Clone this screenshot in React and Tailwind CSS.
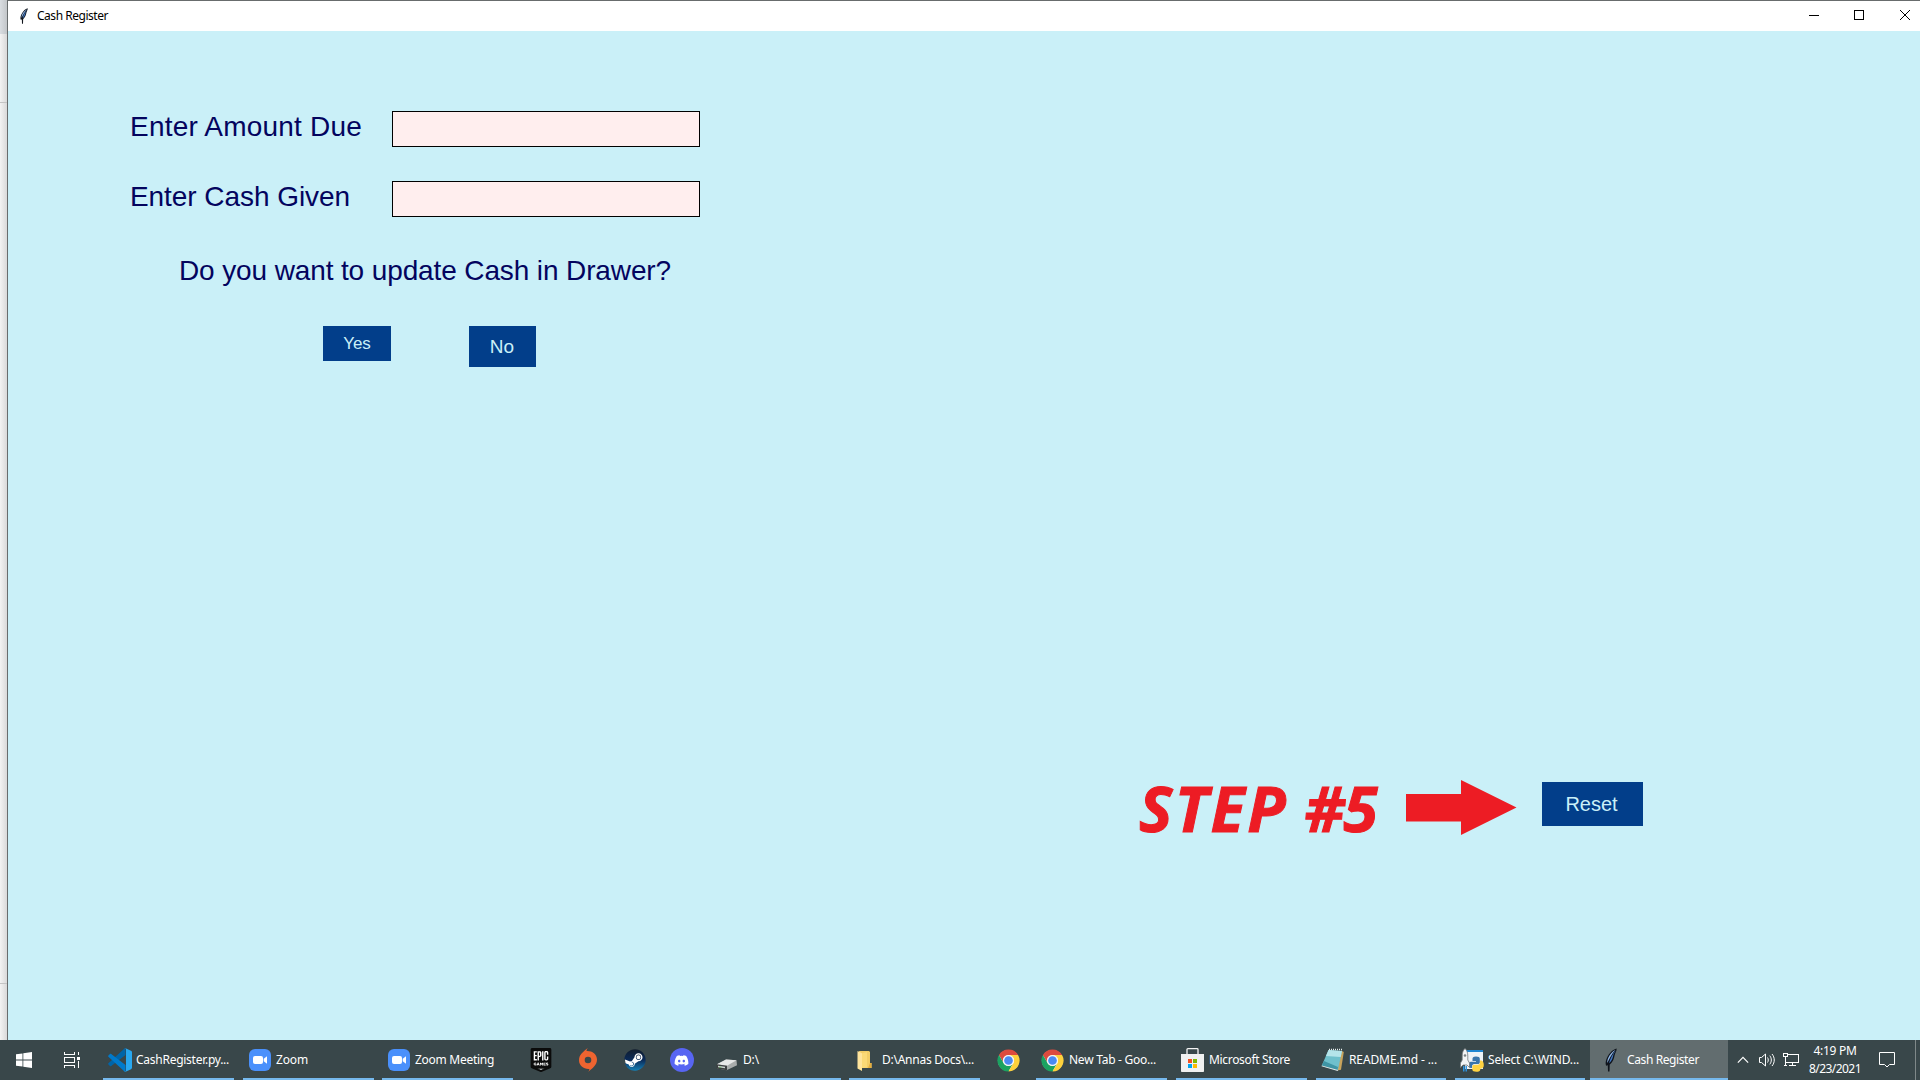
import { useLayoutEffect, useRef, useState } from "react";
import { FaSteam, FaDiscord } from "react-icons/fa";
import { SiEpicgames } from "react-icons/si";

// Single line of text whose tracking is adjusted so that it spans `width` pixels.
function FitText({ width, className = "", children }) {
  const ref = useRef(null);
  const [spacing, setSpacing] = useState(0);
  useLayoutEffect(() => {
    const natural = ref.current.getBoundingClientRect().width;
    setSpacing((width - natural) / children.length);
  }, []);
  return (
    <span ref={ref} className={`inline-block whitespace-nowrap ${className}`} style={{ letterSpacing: `${spacing}px` }}>
      {children}
    </span>
  );
}

function Feather({ className }) {
  return (
    <svg viewBox="0 0 12 24" className={className}>
      <path d="M11.6.5C8 1.4 4.4 4.800 2 9.800c-1.500 3.200-1.700 6-.9 8l1.700-.6.2 6.300h1.500l.2-6.800c3.300-2.800 4.300-6.200 5-9.800C10.300 4.500 11.900 2.800 11.600.5z" fill="#10151c" />
      <path d="M10.500 1.700C7.500 3.200 4.600 6.500 3.200 9.900c-.7 1.700-1.100 3.600-.9 5.200C4 11 6.800 6 10.500 1.700z" fill="#8fb6e6" />
      <path d="M10.600 2.400C7.700 6 5.200 10.500 4 15.300c2.700-2 3.800-5.300 4.300-8.300.5-1.900 1.700-2.900 2.300-4.600z" fill="#3f76c4" />
    </svg>
  );
}

function VsCode() {
  return (
    <svg viewBox="0 0 24 24" className="h-6 w-6">
      <path d="M17.500.3 17.500 7 3.200 18.100c-.4.3-.9.3-1.200 0L.4 16.600c-.4-.4-.4-1 0-1.300L16.500.6z" fill="#0065a9" />
      <path d="M17.500 23.700V17L3.200 5.900c-.4-.3-.9-.3-1.200 0L.4 7.400c-.4.400-.4 1 0 1.300l16.100 14.700z" fill="#007acc" />
      <path d="M17.500 23.800c-.6.200-1.100 0-1.500-.5.8.8 2 .2 2-.7V1.400c0-.9-1.200-1.500-2-.7.400-.5.900-.7 1.500-.5l5.500 2.600c.6.300 1 .8 1 1.500v15.400c0 .6-.4 1.200-1 1.500z" fill="#29a8f0" />
    </svg>
  );
}

function ZoomIcon() {
  return (
    <svg viewBox="0 0 22 22" className="h-[22px] w-[22px]">
      <rect width="22" height="22" rx="6" fill="#4a90fb" />
      <rect x="4" y="7" width="10" height="8" rx="2" fill="#fff" />
      <path d="M14.700 9.700 18 7.300v7.400l-3.300-2.400z" fill="#fff" />
    </svg>
  );
}

function Epic() {
  return (
    <span className="grid h-6 w-6 place-items-center">
      <svg viewBox="0 0 24 24" className="col-start-1 row-start-1 h-6 w-6">
        <path d="M4 2h16v15l-8 5-8-5z" fill="#fff" />
      </svg>
      <SiEpicgames className="col-start-1 row-start-1 h-6 w-6 text-[#0b0b0b]" />
    </span>
  );
}

function Origin() {
  return (
    <svg viewBox="0 0 18 24" className="h-6 w-[18px]">
      <path
        fillRule="evenodd"
        d="M8.800 0C7.900 1 7.600 2 7.500 3 12.800 2.600 18 6 18 11.600c0 6-4.800 8.800-8.800 12.400.8-1.200 1.200-2.100 1.200-3.100C5 21.400 0 17.800 0 12.200 0 6.400 4.600 3.600 8.800 0zM9 8.700a3.300 3.300 0 1 0 0 6.600 3.300 3.300 0 0 0 0-6.600z"
        fill="#ee6430"
      />
    </svg>
  );
}

function Steam() {
  return (
    <span className="grid h-[22px] w-[22px] place-items-center">
      <span className="col-start-1 row-start-1 h-5 w-5 rounded-full bg-white" />
      <svg className="absolute h-0 w-0">
        <defs>
          <linearGradient id="steam" x1="0" y1="0" x2="0" y2="1">
            <stop offset="0" stopColor="#111d2e" />
            <stop offset=".5" stopColor="#0a2a59" />
            <stop offset="1" stopColor="#1580b5" />
          </linearGradient>
        </defs>
      </svg>
      <FaSteam className="col-start-1 row-start-1 h-[22px] w-[22px]" fill="url(#steam)" />
    </span>
  );
}

function Discord() {
  return (
    <span className="flex h-6 w-6 items-center justify-center rounded-full bg-[#5865f2]">
      <FaDiscord className="h-[15px] w-[15px] text-white" />
    </span>
  );
}

function Drive() {
  return (
    <svg viewBox="0 0 22 24" className="-ml-px h-6 w-[22px]">
      <path d="M1 16.300 10 11.500 20.500 12.300 21 17.300 10.500 22.300 1 20.300z" fill="#a9adad" />
      <path d="M1 16.300 10 11.500 20.500 12.300 11 17.800z" fill="#e6e8e8" />
      <path d="M.5 16.300 11 17.800v4.500L.5 20.500z" fill="#3c4041" />
      <path d="M2 17.800l7 1v1.400l-7-1z" fill="#c9d0cf" />
      <path d="M3.200 18.800h2v.8h-2z" fill="#5dbb4c" />
    </svg>
  );
}

function Folder() {
  return (
    <svg viewBox="0 0 22 24" className="h-6 w-[22px]">
      <path d="M4 3h10l1 1v11h1.500v5H6z" fill="#f3cd66" />
      <path d="M2.500 3 7 5.200V23l-4.500-2.500z" fill="#ffe49c" />
      <path d="M7 5.200 12 4v15.500L7 20z" fill="#fbd976" />
      <path d="M15 15h1.500v5H13z" fill="#e6ae3f" />
    </svg>
  );
}

function Chrome() {
  return (
    <svg viewBox="0 0 48 48" className="-ml-px h-[23px] w-[23px]">
      <circle cx="24" cy="24" r="22" fill="#fff" />
      <path d="M4.080 12.500A23 23 0 0 1 43.920 12.500H24a11.500 11.500 0 0 0-9.960 17.250z" fill="#dd4b3e" />
      <path d="M4.080 12.500A23 23 0 0 0 24 47l9.960-17.250A11.500 11.500 0 0 1 14.040 29.750z" fill="#1ba261" />
      <path d="M43.920 12.500A23 23 0 0 1 24 47l9.960-17.250A11.500 11.500 0 0 0 24 12.500z" fill="#fdd13c" />
      <circle cx="24" cy="24" r="11.500" fill="#f4f4f4" />
      <circle cx="24" cy="24" r="9" fill="#4a8af4" />
    </svg>
  );
}

function Store() {
  return (
    <svg viewBox="0 0 23 24" className="-ml-px h-6 w-[23px]">
      <path d="M6 7V1.500a.8.800 0 0 1 .8-.8h9.400a.8.800 0 0 1 .8.800V7" fill="none" stroke="#f4f4f4" strokeWidth="1.300" />
      <path d="M0 6h23v17.200a.8.800 0 0 1-.8.800H.8a.8.800 0 0 1-.8-.8z" fill="#f0f1f1" />
      <path d="M7 11h4v4H7z" fill="#f25022" />
      <path d="M12 11h4v4h-4z" fill="#7fba00" />
      <path d="M7 16h4v4H7z" fill="#00a4ef" />
      <path d="M12 16h4v4h-4z" fill="#ffb900" />
    </svg>
  );
}

function Notepad() {
  return (
    <svg viewBox="0 0 24 24" className="h-6 w-6">
      <path d="M20 2.500 22.800 4 20 21.800 16.500 22.500z" fill="#c9a45c" />
      <path d="M7.500 2 21 3l-4 19L.8 17.500z" fill="#6fc0cc" />
      <path d="M7.500 2 21 3l-1.300 6L5 8z" fill="#b5e4ea" />
      <path d="M.8 17.500 3 13l14 6-.6 3z" fill="#3f95a5" />
      <path d="M.8 17.500 17 22l-.3 1L.5 18.300z" fill="#e4eeee" />
      <path d="M8 1.500h13.500" stroke="#e8eeee" strokeWidth="1.500" strokeDasharray="1 1" />
    </svg>
  );
}

function PyLauncher() {
  return (
    <svg viewBox="0 0 24 24" className="h-6 w-6">
      <path d="M5 2h18v19H5z" fill="#eef3f7" />
      <path d="M5 2h18v2H5z" fill="#1f86d2" />
      <path d="M16 8.500c-3 0-3.500 1-3.500 2.300V13H16v.7h-5c-1.600 0-2.500 1.300-2.500 3.300s.9 3 2.300 3H12v-1.700c0-1.300 1-2.300 2.300-2.300H18c1 0 1.800-.8 1.800-1.800v-3.400c0-1.400-1.300-2.300-3.800-2.300z" fill="#3a75ab" />
      <path d="M20 12.500v2c0 1.300-1 2.300-2.200 2.300h-3.600c-1 0-1.900.9-1.900 1.900v2.800c0 1.300 1.600 2.300 4 2.300 2.500 0 4-.9 4-2.300V20.500h1c1.600 0 2.500-1.200 2.500-3.500s-.9-4.500-2.500-4.500z" fill="#ffd342" />
      <path d="M5 .5C2.800 2.500 2.200 5 2.200 8v4L.5 15v4.500L3 17h4l2.500 2.500V15l-1.700-3V8C7.800 5 7.200 2.500 5 .5z" fill="#f2f4f5" stroke="#72787b" strokeWidth=".8" />
      <circle cx="5" cy="7.500" r="1.300" fill="#7b8285" />
      <path d="M3 18h1.500v5.500H3zM5.500 18H7v5.500H5.500z" fill="#2f92dd" />
    </svg>
  );
}

function TaskButton({ icon, label, textWidth, className = "" }) {
  return (
    <div className={`flex h-10 w-[131px] shrink-0 items-center border-b-2 border-[#76b9ed] pt-0.5 ${className}`}>
      <span className="flex w-6 shrink-0 justify-center">{icon}</span>
      <FitText width={textWidth} className="ml-1">
        {label}
      </FitText>
    </div>
  );
}

function PinnedIcon({ children }) {
  return <div className="flex h-10 w-[47px] shrink-0 items-center justify-center">{children}</div>;
}

function Taskbar() {
  return (
    <footer className="flex h-10 w-full shrink-0 bg-[#39474a] font-['Noto_Sans',sans-serif] text-xs leading-5 text-white">
      <div className="flex w-12 shrink-0 items-center justify-center">
        <svg viewBox="0 0 16 16" className="h-4 w-4" fill="#fff">
          <path d="M0 2.300 6.500 1.400v6.200H0zM7.300 1.300 16 0v7.600H7.300zM0 8.400h6.500v6.200L0 13.700zM7.300 8.400H16V16l-8.700-1.300z" />
        </svg>
      </div>
      <div className="mr-[7px] flex w-12 shrink-0 items-center justify-center">
        <svg viewBox="0 0 16 16" className="h-4 w-4" fill="none" stroke="#fff" shapeRendering="crispEdges">
          <path d="M.5 0v2.500h10V0M.5 5.500h10v5H.5zM.5 16v-2.500h10V16M14.500 0v3M14.500 9v7" />
          <path d="M13 5h3v3h-3z" fill="#fff" stroke="none" />
        </svg>
      </div>
      <TaskButton icon={<VsCode />} label="CashRegister.py..." textWidth={93} className="mr-[9px] pl-[5px]" />
      <TaskButton icon={<ZoomIcon />} label="Zoom" textWidth={32} className="mr-2 pl-[5px]" />
      <TaskButton icon={<ZoomIcon />} label="Zoom Meeting" textWidth={79} className="mr-1 pl-[5px]" />
      <PinnedIcon>
        <Epic />
      </PinnedIcon>
      <PinnedIcon>
        <Origin />
      </PinnedIcon>
      <PinnedIcon>
        <Steam />
      </PinnedIcon>
      <PinnedIcon>
        <Discord />
      </PinnedIcon>
      <TaskButton icon={<Drive />} label="D:\" textWidth={16} className="mr-2 ml-[5px] pl-[5px]" />
      <TaskButton icon={<Folder />} label="D:\Annas Docs\..." textWidth={92} className="mr-[5px] pl-[5px]" />
      <PinnedIcon>
        <Chrome />
      </PinnedIcon>
      <TaskButton icon={<Chrome />} label="New Tab - Goo..." textWidth={87} className="mr-[9px] ml-1 pl-[5px]" />
      <TaskButton icon={<Store />} label="Microsoft Store" textWidth={81} className="mr-[9px] pl-[5px]" />
      <TaskButton icon={<Notepad />} label="README.md - ..." textWidth={88} className="mr-[9px] w-[130px]! pl-[5px]" />
      <TaskButton icon={<PyLauncher />} label="Select C:\WIND..." textWidth={91} className="mr-[5px] w-[130px]! pl-[5px]" />
      <TaskButton
        icon={<Feather className="h-6 w-3" />}
        label="Cash Register"
        textWidth={72}
        className="w-[138px]! bg-[#626d6f] pl-[9px]"
      />
      <div className="ml-[9px] flex items-center gap-2">
        <svg viewBox="0 0 14 8" className="mr-0.5 h-2 w-3" fill="none" stroke="#fff" strokeWidth="1.400">
          <path d="M1 7l6-6 6 6" />
        </svg>
        <svg viewBox="0 0 16 16" className="h-4 w-4" fill="none" stroke="#fff">
          <path d="M.5 5.500h2l4-3.500v12l-4-3.500h-2zM8.500 5.500c1 1.500 1 3.500 0 5M10.800 3.700c2 2.600 2 6 0 8.600M13 2c3 3.600 3 8.400 0 12" />
        </svg>
        <svg viewBox="0 0 16 16" className="h-4 w-4" fill="none" stroke="#fff" shapeRendering="crispEdges">
          <path d="M5 2.500h10.500v8H3M.5 1.500h4v3h-4zM2.500 5v9M9.500 11v2.500M6 13.500h7M1 13.500h3" />
        </svg>
      </div>
      <div className="ml-[9px] flex w-[54px] flex-col items-center pt-0.5 leading-[18px]">
        <FitText width={43}>4:19 PM</FitText>
        <FitText width={52}>8/23/2021</FitText>
      </div>
      <div className="ml-[17px] flex items-center">
        <svg viewBox="0 0 16 16" className="h-4 w-4" fill="none" stroke="#fff">
          <path d="M.5.500h15v12h-5L8 15 5.500 12.500h-5z" />
        </svg>
      </div>
      <div className="ml-5 h-10 w-px bg-[#7f8889]" />
    </footer>
  );
}

function TitleBar() {
  return (
    <header className="flex h-[30px] shrink-0 justify-between bg-white">
      <div className="flex items-center pb-px">
        <Feather className="ml-3 h-4 w-2" />
        <FitText width={71} className="ml-[9px] font-['Noto_Sans',sans-serif] text-xs leading-5 text-black">
          Cash Register
        </FitText>
      </div>
      <div className="flex gap-9 pt-[9px] pr-2.5">
        <svg viewBox="0 0 10 10" className="-mr-px h-2.5 w-2.5" stroke="#000" fill="none" shapeRendering="crispEdges">
          <path d="M0 5.500h10" />
        </svg>
        <svg viewBox="0 0 10 10" className="h-2.5 w-2.5" stroke="#000" fill="none" shapeRendering="crispEdges">
          <path d="M.5.500h9v9h-9z" />
        </svg>
        <svg viewBox="0 0 10 10" className="h-2.5 w-2.5" stroke="#000" fill="none">
          <path d="M0 0l10 10M10 0L0 10" />
        </svg>
      </div>
    </header>
  );
}

function Field({ label, width }) {
  return (
    <div className="flex h-9 items-start">
      <label className="w-[262px] leading-8">
        <FitText width={width}>{label}</FitText>
      </label>
      <input className="h-9 w-[308px] border border-black bg-[#ffeeee] outline-none" />
    </div>
  );
}

export default function App() {
  return (
    <div className="flex h-[1080px] w-[1920px] flex-col overflow-hidden">
      <div className="flex min-h-0 flex-1">
        <aside className="flex w-[7px] shrink-0 flex-col bg-linear-to-r from-[#f3f3f3] to-[#d9d9d9]">
          <div className="h-[34px] bg-linear-to-r from-[#d9dde1] to-[#c3c6c9]" />
          <div className="mt-[68px] h-px bg-[#c4c4c4]" />
          <div className="mt-[880px] h-px bg-[#c4c4c4]" />
        </aside>
        <div className="flex flex-1 flex-col border-t border-l border-[#686c6d]">
          <TitleBar />
          <main className="flex flex-1 flex-col bg-[#caf0f8] pt-20 font-['Liberation_Sans',Arial,sans-serif] text-[28px] text-[#03045e]">
            <div className="ml-[122px] flex flex-col gap-[34px]">
              <Field label="Enter Amount Due" width={232} />
              <Field label="Enter Cash Given" width={220} />
            </div>
            <p className="mt-[38px] ml-[171px] leading-8">
              <FitText width={492}>Do you want to update Cash in Drawer?</FitText>
            </p>
            <div className="mt-[39px] ml-[315px] flex h-[41px] items-start gap-[78px] text-[#caf0f8]">
              <button className="h-[35px] w-[68px] bg-[#023e8a] text-[17px]">Yes</button>
              <button className="h-[41px] w-[67px] bg-[#023e8a] pt-0.5 pr-px text-[19px]">No</button>
            </div>
            <div className="mt-[412px] ml-[1131px] flex h-[57px] items-start">
              <div className="w-[237px] shrink-0 font-['Open_Sans','Noto_Sans',sans-serif] text-[63px] leading-[57px] font-bold whitespace-nowrap text-[#ed1c24] italic [-webkit-text-stroke:1px_#ed1c24]">
                <FitText width={149}>STEP</FitText> <FitText width={72}>#5</FitText>
              </div>
              <svg viewBox="0 0 111 56" className="mt-px ml-[30px] h-14 w-[111px] shrink-0" fill="#ed1c24">
                <path d="M0 14h55V0L110.500 27.500 55 55V41.500H0z" />
              </svg>
              <button className="mt-[3px] ml-[25px] h-11 w-[101px] shrink-0 bg-[#023e8a] pr-0.5 text-[20px] text-[#caf0f8]">
                Reset
              </button>
            </div>
          </main>
        </div>
      </div>
      <Taskbar />
    </div>
  );
}
